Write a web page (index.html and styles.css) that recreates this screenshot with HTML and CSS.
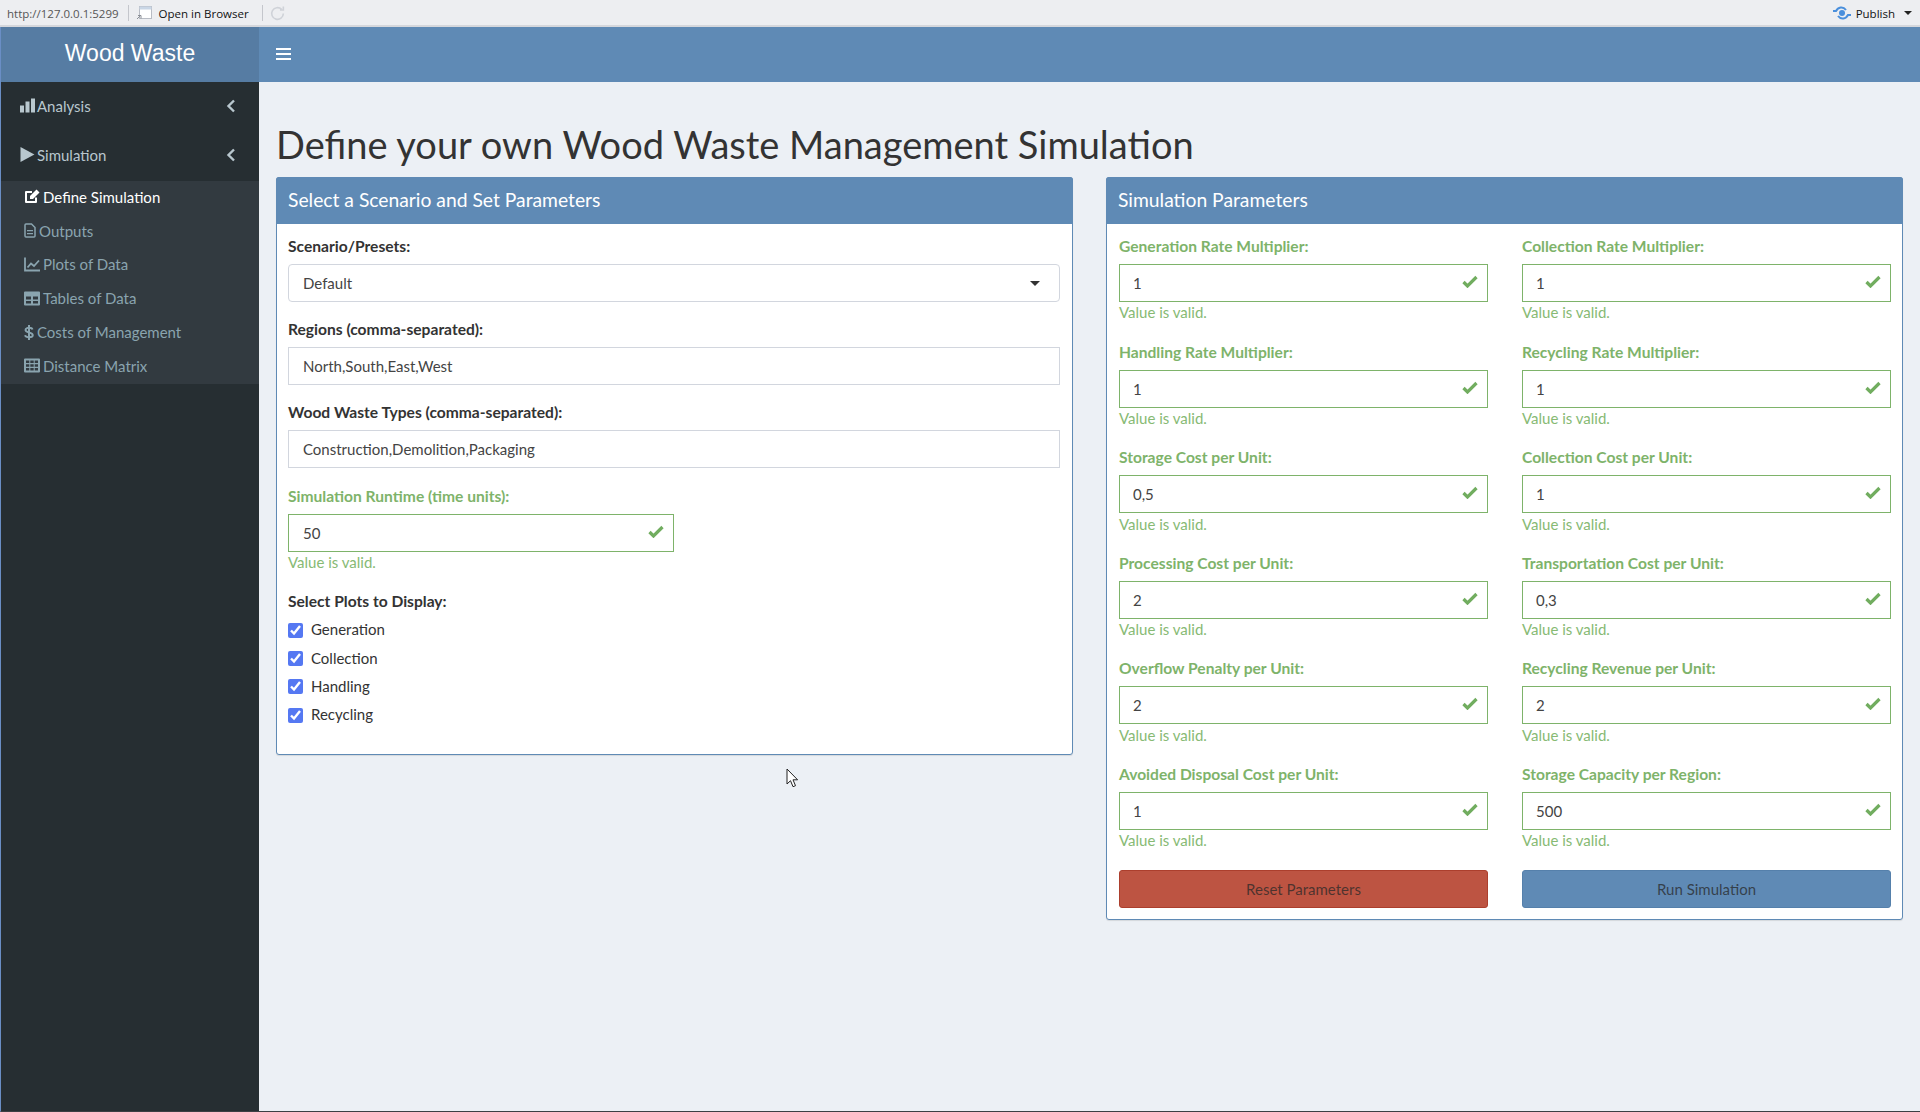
FILE: index.html
```html
<!DOCTYPE html>
<html lang="en">

<head>
    <meta charset="UTF-8">
    <meta name="viewport" content="width=device-width, initial-scale=1.0">
    <title>Wood Waste</title>
    <link rel="stylesheet" href="styles.css">
</head>

<body>
    <!-- viewer toolbar -->
    <div class="toolbar">
        <span class="tb-url">http://127.0.0.1:5299</span>
        <span class="tb-sep"></span>
        <svg class="tb-open" viewBox="0 0 16 14" width="16" height="14">
            <rect x="3.5" y="0.5" width="12" height="12" fill="#fff" stroke="#b8bcc4"/>
            <rect x="3.5" y="0.5" width="12" height="3" fill="#c9d6e6"/>
            <path d="M1 13l3-3M2 9.5h3v3" stroke="#8b8f96" fill="none"/>
        </svg>
        <span class="tb-open-text">Open in Browser</span>
        <span class="tb-sep"></span>
        <svg class="tb-reload" viewBox="0 0 16 16" width="17" height="17">
            <path d="M13.5 8a5.5 5.5 0 1 1-1.6-3.900M13.500 1.500v3.200h-3.200" fill="none" stroke="#cfd2d8" stroke-width="1.500"/>
        </svg>
        <span class="tb-spacer"></span>
        <svg class="tb-publish" viewBox="0 0 20 14" width="20" height="14">
            <circle cx="10" cy="7" r="3" fill="#4a8fdc"/>
            <path d="M1 5h3c2-4 7-5 10-1M19 9h-3c-2 4-7 5-10 1" fill="none" stroke="#4a8fdc" stroke-width="2"/>
        </svg>
        <span class="tb-publish-text">Publish</span>
        <span class="tb-caret"></span>
    </div>

    <div class="app">
        <header class="topbar">
            <div class="logo">Wood Waste</div>
            <div class="navbar">
                <div class="hamburger"><span></span><span></span><span></span></div>
            </div>
        </header>

        <div class="main">
            <aside class="sidebar">
                <a class="menu-item">
                    <svg class="ico" viewBox="0 0 16 14"><path d="M0 7h4v7H0zM5.500 3h4v11h-4zM11 0h4v14h-4z"/></svg>
                    <span>Analysis</span>
                    <svg class="chev" viewBox="0 0 10 14"><path d="M8 1.500L2.500 7 8 12.500" fill="none" stroke="currentColor" stroke-width="2.400"/></svg>
                </a>
                <a class="menu-item">
                    <svg class="ico" viewBox="0 0 14 14"><path d="M0 0l13 7-13 7z"/></svg>
                    <span>Simulation</span>
                    <svg class="chev" viewBox="0 0 10 14"><path d="M8 1.500L2.500 7 8 12.500" fill="none" stroke="currentColor" stroke-width="2.400"/></svg>
                </a>
                <div class="submenu">
                    <a class="sub-item active">
                        <svg class="ico" viewBox="0 0 16 15"><path d="M12 8.500V13H2V3h6" fill="none" stroke="currentColor" stroke-width="2" stroke-linejoin="round"/><path d="M6 7l6.500-6.500 3 3L9 10H6z"/></svg>
                        <span>Define Simulation</span>
                    </a>
                    <a class="sub-item">
                        <svg class="ico ico-file" viewBox="0 0 12 15"><path d="M1 2a1 1 0 0 1 1-1h5.500L11 4.500V13a1 1 0 0 1-1 1H2a1 1 0 0 1-1-1z" fill="none" stroke="currentColor" stroke-width="1.500"/><path d="M3 7h6v1.200H3zM3 10h6v1.200H3z"/></svg>
                        <span>Outputs</span>
                    </a>
                    <a class="sub-item">
                        <svg class="ico" viewBox="0 0 16 14"><path d="M1 0v13h15" fill="none" stroke="currentColor" stroke-width="1.800"/><path d="M3.500 10l3.500-4 3 2.500L15 3" fill="none" stroke="currentColor" stroke-width="1.800"/></svg>
                        <span>Plots of Data</span>
                    </a>
                    <a class="sub-item">
                        <svg class="ico" viewBox="0 0 16 14"><path fill-rule="evenodd" d="M1 0h14a1 1 0 0 1 1 1v12a1 1 0 0 1-1 1H1a1 1 0 0 1-1-1V1a1 1 0 0 1 1-1zM2 5v3h5V5zM9 5v3h5V5zM2 9.500V12h5V9.500zM9 9.500V12h5V9.500z"/></svg>
                        <span>Tables of Data</span>
                    </a>
                    <a class="sub-item">
                        <svg class="ico ico-dollar" viewBox="0 0 10 15"><path d="M8.500 4.500C8 3 6.500 2.800 5 2.800S1.500 3.400 1.500 5 3 7 5 7.500 8.800 8.500 8.800 10.200 7 12.300 5 12.300 1.500 11.700 1 10.300" fill="none" stroke="currentColor" stroke-width="1.900"/><path d="M4 0h2v15H4z"/></svg>
                        <span>Costs of Management</span>
                    </a>
                    <a class="sub-item">
                        <svg class="ico" viewBox="0 0 16 14"><path fill-rule="evenodd" d="M1 0h14a1 1 0 0 1 1 1v12a1 1 0 0 1-1 1H1a1 1 0 0 1-1-1V1a1 1 0 0 1 1-1zM2 2v2.500h3.300V2zM6.300 2v2.500h3.400V2zM10.700 2v2.500H14V2zM2 5.700v2.600h3.300V5.700zM6.300 5.700v2.600h3.400V5.700zM10.700 5.700v2.600H14V5.700zM2 9.500V12h3.300V9.500zM6.300 9.500V12h3.400V9.500zM10.700 9.500V12H14V9.500z"/></svg>
                        <span>Distance Matrix</span>
                    </a>
                </div>
            </aside>

            <main class="content">
                <h1>Define your own Wood Waste Management Simulation</h1>
                <div class="columns">
                    <section class="box">
                        <h3 class="box-title">Select a Scenario and Set Parameters</h3>
                        <div class="box-body box-body-left">
                            <div class="form-group">
                                <label>Scenario/Presets:</label>
                                <div class="select-wrap">
                                    <select class="form-control rounded">
                                        <option>Default</option>
                                    </select>
                                    <span class="select-caret"></span>
                                </div>
                            </div>
                            <div class="form-group">
                                <label>Regions (comma-separated):</label>
                                <input class="form-control" type="text" value="North,South,East,West">
                            </div>
                            <div class="form-group">
                                <label>Wood Waste Types (comma-separated):</label>
                                <input class="form-control" type="text" value="Construction,Demolition,Packaging">
                            </div>
                            <div class="form-group has-success half">
                                <label>Simulation Runtime (time units):</label>
                                <div class="input-wrap">
                                    <input class="form-control" type="text" value="50">
                                    <svg class="check" viewBox="0 0 16 13"><path d="M1.500 7l4 4L14.500 2" fill="none" stroke="currentColor" stroke-width="3.200"/></svg>
                                </div>
                                <p class="help">Value is valid.</p>
                            </div>
                            <div class="form-group plots">
                                <label>Select Plots to Display:</label>
                                <label class="checkbox"><input type="checkbox" checked> Generation</label>
                                <label class="checkbox"><input type="checkbox" checked> Collection</label>
                                <label class="checkbox"><input type="checkbox" checked> Handling</label>
                                <label class="checkbox"><input type="checkbox" checked> Recycling</label>
                            </div>
                        </div>
                    </section>

                    <section class="box">
                        <h3 class="box-title">Simulation Parameters</h3>
                        <div class="box-body param-grid">
                            <div class="form-group has-success">
                                <label>Generation Rate Multiplier:</label>
                                <div class="input-wrap"><input class="form-control" type="text" value="1"><svg class="check" viewBox="0 0 16 13"><path d="M1.500 7l4 4L14.500 2" fill="none" stroke="currentColor" stroke-width="3.200"/></svg></div>
                                <p class="help">Value is valid.</p>
                            </div>
                            <div class="form-group has-success">
                                <label>Collection Rate Multiplier:</label>
                                <div class="input-wrap"><input class="form-control" type="text" value="1"><svg class="check" viewBox="0 0 16 13"><path d="M1.500 7l4 4L14.500 2" fill="none" stroke="currentColor" stroke-width="3.200"/></svg></div>
                                <p class="help">Value is valid.</p>
                            </div>
                            <div class="form-group has-success">
                                <label>Handling Rate Multiplier:</label>
                                <div class="input-wrap"><input class="form-control" type="text" value="1"><svg class="check" viewBox="0 0 16 13"><path d="M1.500 7l4 4L14.500 2" fill="none" stroke="currentColor" stroke-width="3.200"/></svg></div>
                                <p class="help">Value is valid.</p>
                            </div>
                            <div class="form-group has-success">
                                <label>Recycling Rate Multiplier:</label>
                                <div class="input-wrap"><input class="form-control" type="text" value="1"><svg class="check" viewBox="0 0 16 13"><path d="M1.500 7l4 4L14.500 2" fill="none" stroke="currentColor" stroke-width="3.200"/></svg></div>
                                <p class="help">Value is valid.</p>
                            </div>
                            <div class="form-group has-success">
                                <label>Storage Cost per Unit:</label>
                                <div class="input-wrap"><input class="form-control" type="text" value="0,5"><svg class="check" viewBox="0 0 16 13"><path d="M1.500 7l4 4L14.500 2" fill="none" stroke="currentColor" stroke-width="3.200"/></svg></div>
                                <p class="help">Value is valid.</p>
                            </div>
                            <div class="form-group has-success">
                                <label>Collection Cost per Unit:</label>
                                <div class="input-wrap"><input class="form-control" type="text" value="1"><svg class="check" viewBox="0 0 16 13"><path d="M1.500 7l4 4L14.500 2" fill="none" stroke="currentColor" stroke-width="3.200"/></svg></div>
                                <p class="help">Value is valid.</p>
                            </div>
                            <div class="form-group has-success">
                                <label>Processing Cost per Unit:</label>
                                <div class="input-wrap"><input class="form-control" type="text" value="2"><svg class="check" viewBox="0 0 16 13"><path d="M1.500 7l4 4L14.500 2" fill="none" stroke="currentColor" stroke-width="3.200"/></svg></div>
                                <p class="help">Value is valid.</p>
                            </div>
                            <div class="form-group has-success">
                                <label>Transportation Cost per Unit:</label>
                                <div class="input-wrap"><input class="form-control" type="text" value="0,3"><svg class="check" viewBox="0 0 16 13"><path d="M1.500 7l4 4L14.500 2" fill="none" stroke="currentColor" stroke-width="3.200"/></svg></div>
                                <p class="help">Value is valid.</p>
                            </div>
                            <div class="form-group has-success">
                                <label>Overflow Penalty per Unit:</label>
                                <div class="input-wrap"><input class="form-control" type="text" value="2"><svg class="check" viewBox="0 0 16 13"><path d="M1.500 7l4 4L14.500 2" fill="none" stroke="currentColor" stroke-width="3.200"/></svg></div>
                                <p class="help">Value is valid.</p>
                            </div>
                            <div class="form-group has-success">
                                <label>Recycling Revenue per Unit:</label>
                                <div class="input-wrap"><input class="form-control" type="text" value="2"><svg class="check" viewBox="0 0 16 13"><path d="M1.500 7l4 4L14.500 2" fill="none" stroke="currentColor" stroke-width="3.200"/></svg></div>
                                <p class="help">Value is valid.</p>
                            </div>
                            <div class="form-group has-success">
                                <label>Avoided Disposal Cost per Unit:</label>
                                <div class="input-wrap"><input class="form-control" type="text" value="1"><svg class="check" viewBox="0 0 16 13"><path d="M1.500 7l4 4L14.500 2" fill="none" stroke="currentColor" stroke-width="3.200"/></svg></div>
                                <p class="help">Value is valid.</p>
                            </div>
                            <div class="form-group has-success">
                                <label>Storage Capacity per Region:</label>
                                <div class="input-wrap"><input class="form-control" type="text" value="500"><svg class="check" viewBox="0 0 16 13"><path d="M1.500 7l4 4L14.500 2" fill="none" stroke="currentColor" stroke-width="3.200"/></svg></div>
                                <p class="help">Value is valid.</p>
                            </div>
                            <button class="btn btn-red">Reset Parameters</button>
                            <button class="btn btn-blue">Run Simulation</button>
                        </div>
                    </section>
                </div>
            </main>
        </div>
    </div>

    <!-- mouse pointer caught in the screenshot -->
    <svg class="cursor" viewBox="0 0 13 20" width="13" height="20">
        <path d="M1 1v15l3.500-3.300 2.500 6 2.500-1-2.500-5.900h4.600z" fill="#fff" stroke="#222" stroke-width="1"/>
    </svg>
</body>

</html>
```

FILE: styles.css
```css
* {
    box-sizing: border-box;
}

html,
body {
    height: 100%;
}

body {
    margin: 0;
    font-family: "Lato", "Noto Sans", sans-serif;
    font-size: 15px;
    color: #333;
    background-color: #ecf0f5;
    display: flex;
    flex-direction: column;
    overflow: hidden;
}

/* viewer toolbar */
.toolbar {
    height: 27px;
    flex: none;
    display: flex;
    align-items: center;
    padding: 1px 8px 0 7px;
    background-color: #edeef1;
    border-bottom: 2px solid #d5d7dc;
    font-family: "Open Sans", sans-serif;
    font-size: 11.5px;
    color: #111;
}

.tb-url {
    color: #555;
}

.tb-sep {
    width: 1px;
    height: 16px;
    margin: 0 9px;
    background-color: #c4c6cc;
}

.tb-open {
    margin: 0 7px 0 -2px;
}

.tb-open-text {
    margin-right: 4px;
}

.tb-reload {
    margin-left: -3px;
}

.tb-spacer {
    flex: 1;
}

.tb-publish {
    margin-right: 4px;
}

.tb-caret {
    margin-left: 9px;
    border-left: 4px solid transparent;
    border-right: 4px solid transparent;
    border-top: 4px solid #222;
}

/* app shell */
.app {
    flex: 1;
    display: flex;
    flex-direction: column;
    min-height: 0;
    border-left: 1px solid #6a8ec5;
    border-bottom: 1px solid #3c4044;
}

.topbar {
    height: 55px;
    flex: none;
    display: flex;
    background-color: #5f8ab5;
}

.logo {
    width: 258px;
    display: flex;
    align-items: center;
    justify-content: center;
    padding-bottom: 3px;
    background-color: #567ca3;
    color: #fff;
    font-family: "Liberation Sans", Arial, sans-serif;
    font-size: 23px;
}

.navbar {
    flex: 1;
    display: flex;
    align-items: center;
    padding-left: 17px;
}

.hamburger {
    width: 15px;
    display: flex;
    flex-direction: column;
    gap: 3px;
    margin-bottom: 1px;
}

.hamburger span {
    height: 2px;
    background-color: #fff;
}

.main {
    flex: 1;
    display: flex;
    min-height: 0;
}

/* sidebar */
.sidebar {
    width: 258px;
    flex: none;
    background-color: #262e32;
    color: #b8c7ce;
}

.menu-item {
    height: 49px;
    display: flex;
    align-items: center;
    padding: 0 19px 2px;
}

.menu-item .ico {
    margin-right: 1px;
}

.ico {
    width: 16px;
    height: 15px;
    fill: currentColor;
    flex: none;
}

.chev {
    width: 10px;
    height: 14px;
    margin-left: auto;
    margin-right: 4px;
}

.submenu {
    margin-top: 1px;
    background-color: #323a40;
}

.sub-item {
    height: 33.8px;
    display: flex;
    align-items: center;
    gap: 3px;
    padding: 0 0 2px 23px;
    color: #8aa4af;
}

.sub-item.active {
    color: #fff;
}

.ico-file {
    width: 12px;
}

.ico-dollar {
    width: 10px;
}

/* content */
.content {
    flex: 1;
    min-width: 0;
    padding: 0 17px;
}

h1 {
    margin: 0;
    padding-top: 39px;
    height: 95px;
    font-size: 38px;
    line-height: 46px;
    font-weight: 400;
    color: #333;
}

.columns {
    display: grid;
    grid-template-columns: 797px 797px;
    column-gap: 33px;
    align-items: start;
}

.box {
    background-color: #fff;
    border: 1px solid #5f8ab5;
    border-radius: 3px;
    box-shadow: 0 1px 1px rgba(0, 0, 0, 0.1);
}

.box-title {
    margin: -1px -1px 0;
    height: 47px;
    padding: 0 12px 2px;
    display: flex;
    align-items: center;
    background-color: #5f8ab5;
    border-radius: 3px 3px 0 0;
    color: #fff;
    font-size: 19.3px;
    font-weight: 400;
}

.box-body {
    padding: 10px 12px;
}

.box-body-left {
    padding: 10px 12px 10px 11px;
}

.box-body-left .form-control {
    padding: 0 14px;
}

.param-grid {
    display: grid;
    grid-template-columns: 369px 369px;
    column-gap: 34px;
    align-items: start;
    padding-bottom: 11px;
}

/* form */
.form-group {
    margin-bottom: 15px;
}

label {
    display: block;
    height: 25px;
    margin-bottom: 5px;
    line-height: 24px;
    font-weight: 700;
    font-size: 15.6px;
    color: #333;
}

.form-control {
    display: block;
    width: 100%;
    height: 38px;
    padding: 0 13px;
    border: 1px solid #d2d6de;
    border-radius: 0;
    background-color: #fff;
    font-family: inherit;
    font-size: 15px;
    color: #444;
    outline: none;
}

.form-control.rounded {
    border-radius: 4px;
    appearance: none;
}

.select-wrap,
.input-wrap {
    position: relative;
}

.select-caret {
    position: absolute;
    right: 20px;
    top: 17px;
    border-left: 5px solid transparent;
    border-right: 5px solid transparent;
    border-top: 5px solid #333;
}

.half {
    width: 386px;
    margin-top: 16px;
    margin-bottom: 14px;
}

.has-success label {
    color: #7eb36a;
}

.has-success .form-control {
    border-color: #7eb36a;
}

.check {
    position: absolute;
    right: 10px;
    top: 11px;
    width: 16px;
    height: 13px;
    color: #71ad5f;
}

.help {
    margin: 2.4px 0 0;
    height: 20.2px;
    line-height: 17px;
    color: #87ba74;
}

.plots {
    margin-bottom: 15.5px;
}

.plots > label:first-child {
    margin-bottom: 1.5px;
}

.checkbox {
    display: flex;
    align-items: center;
    height: 28.3px;
    margin: 0;
    font-size: 15px;
    font-weight: 400;
    line-height: 28px;
}

.checkbox input {
    width: 15px;
    height: 15px;
    margin: 2px 8px 0 0;
    accent-color: #5578f2;
}

.btn {
    height: 38px;
    margin-top: 3px;
    border-radius: 3px;
    font-family: inherit;
    font-size: 15px;
    color: rgba(40, 40, 40, 0.75);
}

.btn-red {
    background-color: #bd5442;
    border: 1px solid #ac3f2d;
}

.btn-blue {
    background-color: #5f8ab5;
    border: 1px solid #5580ab;
}

.cursor {
    position: absolute;
    left: 786px;
    top: 768px;
}
```
